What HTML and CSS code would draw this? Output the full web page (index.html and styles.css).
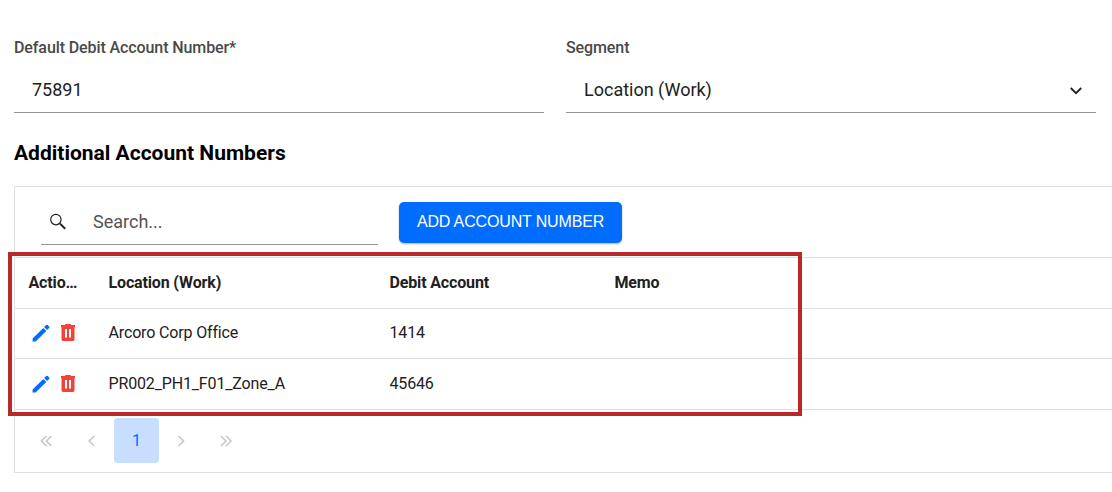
FILE: index.html
```
<!DOCTYPE html>
<html lang="en">

<head>
    <meta charset="UTF-8">
    <meta name="viewport" content="width=device-width, initial-scale=1.0">
    <title>Account Numbers</title>
    <link rel="stylesheet" href="styles.css">
</head>

<body>
    <main>
        <form class="fields">
            <div class="field">
                <label for="debit">Default Debit Account Number*</label>
                <div class="field-box">
                    <input type="text" id="debit" value="75891">
                </div>
            </div>
            <div class="field">
                <label id="segmentLabel">Segment</label>
                <div class="field-box" role="combobox" aria-labelledby="segmentLabel">
                    <span class="field-value">Location (Work)</span>
                    <svg class="chevron" width="14" height="14" viewBox="0 0 14 14">
                        <path d="M1.8 5 L7 10.2 L12.2 5" />
                    </svg>
                </div>
            </div>
        </form>

        <h2>Additional Account Numbers</h2>

        <div class="panel">
            <!-- Search and add -->
            <div class="toolbar">
                <div class="search">
                    <svg width="18" height="18" viewBox="0 0 18 18">
                        <circle cx="6.9" cy="6.6" r="5.2" />
                        <path class="handle" d="M11 10.6 L16.2 15.8" />
                    </svg>
                    <input type="text" placeholder="Search..." aria-label="Search">
                </div>
                <button type="button" class="add-button">ADD ACCOUNT NUMBER</button>
            </div>

            <!-- Account numbers -->
            <table>
                <colgroup>
                    <col class="col-actions">
                    <col class="col-location">
                    <col class="col-debit">
                    <col>
                </colgroup>
                <thead>
                    <tr>
                        <th>Actions</th>
                        <th>Location (Work)</th>
                        <th>Debit Account</th>
                        <th>Memo</th>
                    </tr>
                </thead>
                <tbody>
                    <tr>
                        <td>
                            <div class="actions">
                                <svg class="edit" width="18" height="18" viewBox="0 0 18 18">
                                    <path d="M.6 14.6V17.6H3.6L14.3 6.9L11.3 3.9Z M15.1 6.1L17.1 4.1Q17.9 3.3 17.1 2.5L15.7 1.1Q14.9 .3 14.1 1.1L12.1 3.1Z" />
                                </svg>
                                <svg class="delete" width="14" height="17" viewBox="0 0 14 17">
                                    <path fill-rule="evenodd" d="M0 1H3.8L4.6 0H9.4L10.2 1H14V3H13.5V15.6Q13.5 17 12 17H2Q.5 17 .5 15.6V3H0Z M4 5V13.5H6V5Z M8 5V13.5H10V5Z" />
                                </svg>
                            </div>
                        </td>
                        <td>Arcoro Corp Office</td>
                        <td>1414</td>
                        <td></td>
                    </tr>
                    <tr>
                        <td>
                            <div class="actions">
                                <svg class="edit" width="18" height="18" viewBox="0 0 18 18">
                                    <path d="M.6 14.6V17.6H3.6L14.3 6.9L11.3 3.9Z M15.1 6.1L17.1 4.1Q17.9 3.3 17.1 2.5L15.7 1.1Q14.9 .3 14.1 1.1L12.1 3.1Z" />
                                </svg>
                                <svg class="delete" width="14" height="17" viewBox="0 0 14 17">
                                    <path fill-rule="evenodd" d="M0 1H3.8L4.6 0H9.4L10.2 1H14V3H13.5V15.6Q13.5 17 12 17H2Q.5 17 .5 15.6V3H0Z M4 5V13.5H6V5Z M8 5V13.5H10V5Z" />
                                </svg>
                            </div>
                        </td>
                        <td>PR002_PH1_F01_Zone_A</td>
                        <td>45646</td>
                        <td></td>
                    </tr>
                </tbody>
            </table>

            <!-- Pagination -->
            <nav class="pager">
                <button type="button" aria-label="First page">
                    <svg width="14" height="14" viewBox="0 0 14 14"><path d="M6.5 2L1.5 7L6.5 12M11.5 2L6.5 7L11.5 12" /></svg>
                </button>
                <button type="button" aria-label="Previous page">
                    <svg width="14" height="14" viewBox="0 0 14 14"><path d="M9.2 2L4.2 7L9.2 12" /></svg>
                </button>
                <button type="button" class="current">1</button>
                <button type="button" aria-label="Next page">
                    <svg width="14" height="14" viewBox="0 0 14 14"><path d="M3.5 2L8.5 7L3.5 12" /></svg>
                </button>
                <button type="button" aria-label="Last page">
                    <svg width="14" height="14" viewBox="0 0 14 14"><path d="M1 2L6 7L1 12M6 2L11 7L6 12" /></svg>
                </button>
            </nav>

            <div class="highlight"></div>
        </div>
    </main>
</body>

</html>
```
FILE: styles.css
```
* {
    box-sizing: border-box;
}

body {
    margin: 0;
    font-family: Roboto, sans-serif;
    font-size: 16px;
    color: #212121;
    background-color: white;
    overflow: hidden;
}

main {
    padding: 38px 0 0 14px;
}

.fields {
    display: flex;
    gap: 22px;
}

.field {
    width: 530px;
}

label {
    display: block;
    height: 20px;
    line-height: 20px;
    font-weight: 500;
    letter-spacing: -0.1px;
    color: #494949;
}

.field-box {
    display: flex;
    align-items: center;
    justify-content: space-between;
    height: 55px;
    padding: 9px 13px 0 18px;
    border-bottom: 1px solid #949494;
    font-size: 18px;
}

input {
    width: 100%;
    padding: 0;
    border: none;
    outline: none;
    background: none;
    font: inherit;
    font-size: 18px;
    color: inherit;
}

input::placeholder {
    color: #545454;
    opacity: 1;
}

.chevron {
    fill: none;
    stroke: #212121;
    stroke-width: 1.8;
}

h2 {
    margin: 28px 0 21px;
    font-size: 21px;
    line-height: 24px;
    font-weight: 700;
    color: black;
}

.panel {
    position: relative;
    width: 1110px;
    height: 287px;
    border: 1px solid #e0e0e0;
}

.toolbar {
    display: flex;
    align-items: flex-start;
    gap: 21px;
    height: 70px;
    padding: 15px 26px 0;
}

.search {
    display: flex;
    align-items: center;
    gap: 26px;
    width: 337px;
    height: 43px;
    padding: 0 0 3px 8px;
    border-bottom: 1px solid #949494;
}

.search svg {
    flex: none;
    fill: none;
    stroke: #212121;
    stroke-width: 1.2;
}

.search .handle {
    stroke-width: 2;
}

.add-button {
    width: 223px;
    height: 41px;
    padding: 0 0 2px;
    border: none;
    border-radius: 5px;
    background-color: #006dff;
    box-shadow: 0 1px 2px rgba(0, 0, 0, 0.3);
    font-family: "Liberation Sans", Arial, sans-serif;
    font-size: 16px;
    letter-spacing: -0.15px;
    color: white;
    white-space: nowrap;
}

table {
    width: 100%;
    table-layout: fixed;
    border-collapse: separate;
    border-spacing: 0;
    letter-spacing: -0.15px;
}

.col-actions {
    width: 80px;
}

.col-location {
    width: 281px;
}

.col-debit {
    width: 225px;
}

th, td {
    height: 51px;
    padding: 0 14px 1px 13.5px;
    border-top: 1px solid #e0e0e0;
    text-align: left;
    overflow: hidden;
    text-overflow: ellipsis;
    white-space: nowrap;
}

th {
    font-weight: 700;
}

tbody tr:first-child td {
    height: 50px;
    padding-bottom: 2px;
}

tbody tr:last-child td {
    height: 52px;
    border-bottom: 1px solid #e0e0e0;
}

.actions {
    display: flex;
    align-items: center;
    gap: 11px;
    padding-left: 3.5px;
}

.actions svg {
    flex: none;
}

.edit {
    fill: #006dff;
}

.delete {
    fill: #f44336;
}

.pager {
    display: flex;
    padding: 8px 9px;
}

.pager button {
    display: flex;
    align-items: center;
    justify-content: center;
    width: 45px;
    height: 45px;
    padding: 0;
    border: none;
    border-radius: 4px;
    background: none;
    font: inherit;
    color: #c8c8c8;
}

.pager .current {
    background-color: #c8deff;
    color: #006dff;
}

.pager svg {
    fill: none;
    stroke: currentColor;
    stroke-width: 1.6;
}

/* Frame around the table, drawn over the panel edge */
.highlight {
    position: absolute;
    top: 65px;
    left: -7px;
    width: 794px;
    height: 164px;
    border: 4px solid #b92929;
    pointer-events: none;
}
```
